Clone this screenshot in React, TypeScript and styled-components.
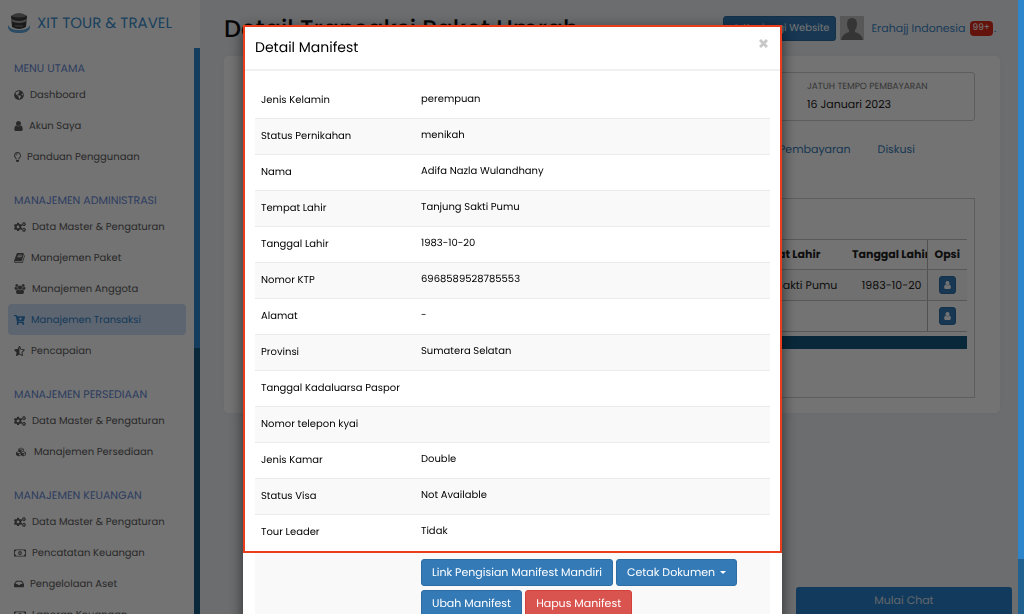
import React from "react";
import styled, { createGlobalStyle } from "styled-components";
import {
  FaGlobeAmericas,
  FaRegLightbulb,
  FaCogs,
  FaCartPlus,
  FaStarHalfAlt,
  FaCubes,
  FaRegMoneyBillAlt,
  FaInbox,
  FaExternalLinkAlt,
} from "react-icons/fa";

const Global = createGlobalStyle`
  * { box-sizing: border-box; }
  html, body, #root { height: 100%; }
  body {
    margin: 0;
    overflow: hidden;
    font-family: Poppins, Inter, "Liberation Sans", sans-serif;
    font-size: 11px;
    text-rendering: geometricPrecision;
    color: #111;
  }
  button { font: inherit; text-rendering: inherit; }
  a { text-decoration: none; }
  h1, h2, h3, p, ul, dl { margin: 0; padding: 0; }
`;

/* ---------- icons ---------- */

type IconProps = { width?: number; height?: number };

const UserIcon = (p: IconProps) => (
  <svg viewBox="256 128 1280 1536" fill="currentColor" aria-hidden="true" {...p}>
    <path d="M1536 1399q0 109-62.5 187t-150.5 78h-854q-88 0-150.5-78t-62.5-187q0-85 8.5-160.5t31.5-152 58.5-131 94-89 134.5-34.5q131 128 313 128t313-128q76 0 134.5 34.5t94 89 58.5 131 31.5 152 8.5 160.5zm-256-887q0 159-112.5 271.5t-271.5 112.5-271.5-112.5-112.5-271.5 112.5-271.5 271.5-112.5 271.5 112.5 112.5 271.5z" />
  </svg>
);

const BookIcon = (p: IconProps) => (
  <svg viewBox="64 128 1670 1536" fill="currentColor" aria-hidden="true" {...p}>
    <path d="M1703 478q40 57 18 129l-275 906q-19 64-76.5 107.5t-122.5 43.5h-923q-77 0-148.5-53.5t-99.5-131.5q-24-67-2-127 0-4 3-27t4-37q1-8-3-21.5t-3-19.5q2-11 8-21t16.5-23.5 16.5-23.5q23-38 45-91.5t30-91.5q3-10 .5-30t-.5-28q3-11 17-28t17-23q21-36 42-92t25-90q1-9-2.5-32t.5-28q4-13 22-30.5t22-22.5q19-26 42.5-84.5t27.5-96.5q1-8-3-25.5t-2-26.5q2-8 9-18t18-23 17-21q8-12 16.5-30.5t15-35 16-36 19.5-32 26.5-23.5 36-11.5 47.5 5.5l-1 3q38-9 51-9h761q74 0 114 56t18 130l-274 906q-36 119-71.5 153.5t-128.5 34.5h-869q-27 0-38 15-11 16-1 43 24 70 144 70h923q29 0 56-15.5t35-41.5l300-987q7-22 5-57 38 15 59 43zm-1064 2q-4 13 2 22.5t20 9.5h608q13 0 25.5-9.5t16.5-22.5l21-64q4-13-2-22.5t-20-9.5h-608q-13 0-25.5 9.5t-16.5 22.5zm-83 256q-4 13 2 22.5t20 9.5h608q13 0 25.5-9.5t16.5-22.5l21-64q4-13-2-22.5t-20-9.5h-608q-13 0-25.5 9.5t-16.5 22.5z" />
  </svg>
);

const UsersIcon = (p: IconProps) => (
  <svg viewBox="-64 0 1920 1792" fill="currentColor" aria-hidden="true" {...p}>
    <path d="M529 896q-162 5-265 128h-134q-82 0-138-40.5t-56-118.5q0-353 124-353 6 0 43.5 21t97.5 42.5 119 21.5q67 0 133-23-5 37-5 66 0 139 81 256zm1071 637q0 120-73 189.5t-194 69.5h-874q-121 0-194-69.5t-73-189.5q0-53 3.5-103.5t14-109 26.5-108.5 43-97.5 62-81 85.5-53.5 111.5-20q10 0 43 21.5t73 48 107 48 135 21.5 135-21.5 107-48 73-48 43-21.5q61 0 111.5 20t85.5 53.5 62 81 43 97.5 26.5 108.5 14 109 3.5 103.5zm-1024-1277q0 106-75 181t-181 75-181-75-75-181 75-181 181-75 181 75 75 181zm704 384q0 159-112.5 271.5t-271.5 112.5-271.5-112.5-112.5-271.5 112.5-271.5 271.5-112.5 271.5 112.5 112.5 271.5zm576 225q0 78-56 118.5t-138 40.5h-134q-103-123-265-128 81-117 81-256 0-29-5-66 66 23 133 23 59 0 119-21.5t97.5-42.5 43.5-21q124 0 124 353zm-128-609q0 106-75 181t-181 75-181-75-75-181 75-181 181-75 181 75 75 181z" />
  </svg>
);

const CloseIcon = () => (
  <svg width="9" height="9" viewBox="0 0 9 9" stroke="currentColor" strokeWidth="3" aria-hidden="true">
    <path d="M1 1 8 8M8 1 1 8" />
  </svg>
);

const LogoIcon = () => (
  <svg width="24" height="24" viewBox="0 0 24 24" aria-hidden="true">
    <path d="M1 14q-1 8 11 8t11-8q-2 5-11 5T1 14z" fill="#5fa8dd" />
    <path d="M4 5q8-4 16 0l-1 11q-7 4-14 0z" fill="#3c3c3c" />
    <path d="M4 5q8-6 16 0-8 3-16 0z" fill="#7c7c7c" />
    <path d="M4 8q8 4 16 0v2q-8 4-16 0z" fill="#a4a4a4" />
    <path d="M8 15h8" stroke="#8a8a8a" />
  </svg>
);

/* ---------- page frame ---------- */

const Page = styled.div`
  display: flex;
  height: 100%;
  overflow: hidden;
  background: #f0f2f6;
`;

const Track = styled.div`
  flex: none;
  width: 6px;
  background: #145a82;
`;

const PageTrack = styled(Track)`
  position: relative;
  z-index: 20;
  background: #20618f;
`;

const Thumb = styled.div<{ $size: number }>`
  height: ${(p) => p.$size}%;
  background: #2d86cc;
`;

/* ---------- sidebar ---------- */

const Sidebar = styled.aside`
  flex: none;
  display: flex;
  flex-direction: column;
  width: 200px;
  background: #fff;
`;

const Brand = styled.a`
  flex: none;
  display: flex;
  align-items: center;
  gap: 6px;
  height: 48px;
  padding: 0 7px 2px;
  font-size: 15px;
  color: #3a8fd0;
  white-space: nowrap;
`;

const SidebarBody = styled.div`
  flex: 1;
  display: flex;
  min-height: 0;
`;

const Menu = styled.nav`
  flex: 1;
  overflow: hidden;
  padding: 9px 8px 0;
`;

const MenuGroup = styled.section`
  margin-bottom: 17px;
`;

const MenuHeading = styled.h2`
  padding-left: 6px;
  line-height: 22px;
  font-size: 11px;
  font-weight: 400;
  color: #6488d6;
  white-space: nowrap;
`;

const MenuList = styled.ul`
  list-style: none;
`;

const MenuLink = styled.a<{ $active?: boolean }>`
  display: flex;
  align-items: center;
  gap: 6px;
  height: 31px;
  padding-left: 6px;
  border-radius: 4px;
  font-size: 10px;
  background: ${(p) => (p.$active ? "#cfe0fb" : "transparent")};
  color: ${(p) => (p.$active ? "#3182c4" : "#5c5c5c")};
  white-space: nowrap;
`;

const MenuIcon = styled.span<{ $width: number }>`
  display: flex;
  width: ${(p) => p.$width}px;

  svg { width: 100%; height: 10px; }
`;

/* ---------- main ---------- */

const Main = styled.main`
  flex: 1;
  min-width: 0;
  padding: 0 18px 0 24px;
`;

const TopBar = styled.header`
  display: flex;
  align-items: center;
  height: 56px;
`;

const PageTitle = styled.h1`
  flex: 1;
  min-width: 0;
  padding-top: 4px;
  font-size: 24px;
  font-weight: 500;
  line-height: 34px;
  white-space: nowrap;
`;

const PrimaryButton = styled.button`
  display: inline-flex;
  align-items: center;
  justify-content: center;
  gap: 5px;
  border: 1px solid #2e6da4;
  border-radius: 3px;
  background: #337ab7;
  color: #fff;
  white-space: nowrap;
`;

const SiteButton = styled(PrimaryButton)`
  width: 113px;
  height: 25px;
  padding: 0 6px;
  font-size: 10px;
`;

const Avatar = styled.svg`
  margin: 0 7px 0 4px;
`;

const Account = styled.a`
  font-size: 11px;
  color: #3a86c8;
  white-space: nowrap;
`;

const Badge = styled.span`
  margin-left: 4px;
  padding: 0 3px;
  border-radius: 4px;
  line-height: 15px;
  font-size: 9px;
  background: #dd2b1c;
  color: #fff;
`;

const Dot = styled.span`
  width: 7px;
  padding-left: 1px;
  color: #3a86c8;
`;

const Card = styled.section`
  height: 357px;
  padding: 16px 25px;
  border-radius: 5px;
  background: #fff;
  box-shadow: 0 0 8px rgba(0, 0, 0, 0.04);
`;

const InfoBox = styled.dl`
  display: flex;
  justify-content: flex-end;
  height: 49px;
  padding: 8px 0;
  border: 1px solid #cfcfcf;
  border-radius: 3px;
`;

const InfoItem = styled.div`
  width: 167px;
`;

const InfoLabel = styled.dt`
  line-height: 12px;
  font-size: 9px;
  color: #777;
`;

const InfoValue = styled.dd`
  margin: 0;
  line-height: 22px;
  color: #222;
`;

const Tabs = styled.nav`
  display: flex;
  justify-content: flex-end;
  gap: 27px;
  padding: 19px 60px 0 0;
  line-height: 18px;

  a { color: #337ab7; }
`;

const Panel = styled.div`
  height: 200px;
  margin-top: 40px;
  padding: 40px 7px 0;
  border: 1px solid #cfcfcf;
`;

const ManifestTable = styled.table`
  width: 100%;
  table-layout: fixed;
  border-collapse: collapse;
  color: #222;

  th, td {
    height: 31px;
    padding: 0;
    overflow: hidden;
    border-top: 1px solid #c4c4c4;
    border-bottom: 1px solid #c4c4c4;
    white-space: nowrap;
    text-align: center;
  }
  th { height: 30px; font-weight: 700; }
  tbody tr:first-child { background: #f9f9f9; }
  th:nth-child(3) { padding-left: 8px; text-align: left; }
  td:nth-child(3) { padding-right: 5px; text-align: right; }
  th:last-child, td:last-child { border-left: 1px solid #b4b4b4; }
`;

const RowButton = styled(PrimaryButton)`
  width: 17px;
  height: 18px;
  padding: 0;
  vertical-align: middle;
`;

const TableScroll = styled.div`
  height: 13px;
  margin-top: 4px;
  background: #145a82;
`;

const ChatButton = styled.button`
  position: fixed;
  right: 12px;
  bottom: 0;
  width: 216px;
  height: 27px;
  border: 0;
  border-radius: 3px 3px 0 0;
  background: #2980cc;
  font-size: 11px;
  color: #d8e2ec;
`;

/* ---------- modal ---------- */

const Backdrop = styled.div`
  position: fixed;
  inset: 0 6px 0 0;
  z-index: 10;
  display: flex;
  justify-content: center;
  align-items: flex-start;
  padding: 25px 0 0 7px;
  overflow: hidden;
  background: rgba(0, 0, 0, 0.55);
`;

const Dialog = styled.div`
  width: 539px;
  max-width: 100%;
  background: #fff;
  box-shadow: 0 4px 14px rgba(0, 0, 0, 0.6);
  color: #000;
`;

const Highlight = styled.div`
  padding-bottom: 3px;
  outline: 2px solid #e93d1c;
  outline-offset: -2px;
`;

const DialogHeader = styled.header`
  display: flex;
  justify-content: space-between;
  align-items: center;
  height: 46px;
  padding: 0 12px;
  border-bottom: 2px solid #f0f0f0;
`;

const DialogTitle = styled.h2`
  font-size: 14px;
  font-weight: 400;
`;

const CloseButton = styled.button`
  display: flex;
  padding: 2px;
  margin-bottom: 7px;
  border: 0;
  background: none;
  color: #c8c8c8;
`;

const Details = styled.table`
  width: calc(100% - 24px);
  margin: 11px 12px 0;
  table-layout: fixed;
  border-spacing: 0;
  font-size: 10px;

  tr:nth-child(even) { background: #f9f9f9; }
  th, td {
    height: 36px;
    padding: 0 6px 1px;
    border-top: 1px solid #ebebeb;
    font-weight: 400;
    text-align: left;
  }
  tr:first-child > * { border-color: transparent; }
  th { width: 160px; white-space: nowrap; }
  td { padding-bottom: 3px; }
`;

const Actions = styled.footer`
  display: flex;
  flex-wrap: wrap;
  gap: 4px 3px;
  margin: 0 12px;
  padding: 6px 20px 9px 166px;
  background: #f9f9f9;
`;

const ActionButton = styled(PrimaryButton)<{ $danger?: boolean }>`
  height: 27px;
  padding: 0 10px;
  font-size: 11px;
  background: ${(p) => (p.$danger ? "#d9534f" : "#337ab7")};
  border-color: ${(p) => (p.$danger ? "#d43f3a" : "#2e6da4")};
`;

const Caret = styled.span`
  border: 3px solid transparent;
  border-top-color: currentColor;
  border-bottom: 0;
`;

/* ---------- data ---------- */

type Item = { label: string; icon: React.ComponentType<any>; size: number; active?: boolean };

const groups: { title: string; items: Item[] }[] = [
  {
    title: "MENU UTAMA",
    items: [
      { label: "Dashboard", icon: FaGlobeAmericas, size: 10 },
      { label: "Akun Saya", icon: UserIcon, size: 9 },
      { label: "Panduan Penggunaan", icon: FaRegLightbulb, size: 7 },
    ],
  },
  {
    title: "MANAJEMEN ADMINISTRASI",
    items: [
      { label: "Data Master & Pengaturan", icon: FaCogs, size: 12 },
      { label: "Manajemen Paket", icon: BookIcon, size: 11 },
      { label: "Manajemen Anggota", icon: UsersIcon, size: 12 },
      { label: "Manajemen Transaksi", icon: FaCartPlus, size: 11, active: true },
      { label: "Pencapaian", icon: FaStarHalfAlt, size: 11 },
    ],
  },
  {
    title: "MANAJEMEN PERSEDIAAN",
    items: [
      { label: "Data Master & Pengaturan", icon: FaCogs, size: 12 },
      { label: "Manajemen Persediaan", icon: FaCubes, size: 14 },
    ],
  },
  {
    title: "MANAJEMEN KEUANGAN",
    items: [
      { label: "Data Master & Pengaturan", icon: FaCogs, size: 12 },
      { label: "Pencatatan Keuangan", icon: FaRegMoneyBillAlt, size: 12 },
      { label: "Pengelolaan Aset", icon: FaInbox, size: 10 },
      { label: "Laporan Keuangan", icon: FaRegMoneyBillAlt, size: 12 },
    ],
  },
];

const details: [string, string][] = [
  ["Jenis Kelamin", "perempuan"],
  ["Status Pernikahan", "menikah"],
  ["Nama", "Adifa Nazla Wulandhany"],
  ["Tempat Lahir", "Tanjung Sakti Pumu"],
  ["Tanggal Lahir", "1983-10-20"],
  ["Nomor KTP", "6968589528785553"],
  ["Alamat", "-"],
  ["Provinsi", "Sumatera Selatan"],
  ["Tanggal Kadaluarsa Paspor", ""],
  ["Nomor telepon kyai", ""],
  ["Jenis Kamar", "Double"],
  ["Status Visa", "Not Available"],
  ["Tour Leader", "Tidak"],
];

export default function App() {
  return (
    <>
      <Global />
      <Page>
        <Sidebar>
          <Brand href="#">
            <LogoIcon />
            XIT TOUR &amp; TRAVEL
          </Brand>
          <SidebarBody>
            <Menu>
              {groups.map((g) => (
                <MenuGroup key={g.title}>
                  <MenuHeading>{g.title}</MenuHeading>
                  <MenuList>
                    {g.items.map(({ label, icon: Icon, size, active }) => (
                      <li key={label}>
                        <MenuLink href="#" $active={active}>
                          <MenuIcon $width={size}>
                            <Icon />
                          </MenuIcon>
                          {label}
                        </MenuLink>
                      </li>
                    ))}
                  </MenuList>
                </MenuGroup>
              ))}
            </Menu>
            <Track>
              <Thumb $size={53} />
            </Track>
          </SidebarBody>
        </Sidebar>

        <Main>
          <TopBar>
            <PageTitle>Detail Transaksi Paket Umrah</PageTitle>
            <SiteButton type="button">
              <FaExternalLinkAlt size={9} />
              Kunjungi Website
            </SiteButton>
            <Avatar width="24" height="24" viewBox="0 0 24 24" aria-hidden="true">
              <path d="M0 0h24v24H0z" fill="#c2c2c2" />
              <path d="M7 8q0-6 5-6t5 6q0 4-2 6v2q7 2 8 8H1q1-6 8-8v-2q-2-2-2-6z" fill="#777" />
            </Avatar>
            <Account href="#">Erahajj Indonesia</Account>
            <Badge>99+</Badge>
            <Dot>.</Dot>
          </TopBar>

          <Card>
            <InfoBox>
              <InfoItem>
                <InfoLabel>JATUH TEMPO PEMBAYARAN</InfoLabel>
                <InfoValue>16 Januari 2023</InfoValue>
              </InfoItem>
            </InfoBox>
            <Tabs>
              <a href="#">Pembayaran</a>
              <a href="#">Diskusi</a>
            </Tabs>
            <Panel>
              <ManifestTable>
                <colgroup>
                  <col />
                  <col width="122" />
                  <col width="83" />
                  <col width="40" />
                </colgroup>
                <thead>
                  <tr>
                    <th />
                    <th>Tempat Lahir</th>
                    <th>Tanggal Lahir</th>
                    <th>Opsi</th>
                  </tr>
                </thead>
                <tbody>
                  <tr>
                    <td />
                    <td>Tanjung Sakti Pumu</td>
                    <td>1983-10-20</td>
                    <td>
                      <RowButton type="button" aria-label="Detail">
                        <UserIcon width={7} height={8} />
                      </RowButton>
                    </td>
                  </tr>
                  <tr>
                    <td />
                    <td />
                    <td />
                    <td>
                      <RowButton type="button" aria-label="Detail">
                        <UserIcon width={7} height={8} />
                      </RowButton>
                    </td>
                  </tr>
                </tbody>
              </ManifestTable>
              <TableScroll />
            </Panel>
          </Card>
          <ChatButton type="button">Mulai Chat</ChatButton>
        </Main>

        <PageTrack>
          <Thumb $size={91} />
        </PageTrack>
      </Page>

      <Backdrop>
        <Dialog role="dialog" aria-labelledby="manifest-title">
          <Highlight>
            <DialogHeader>
              <DialogTitle id="manifest-title">Detail Manifest</DialogTitle>
              <CloseButton type="button" aria-label="Tutup">
                <CloseIcon />
              </CloseButton>
            </DialogHeader>
            <Details>
              <tbody>
                {details.map(([label, value]) => (
                  <tr key={label}>
                    <th scope="row">{label}</th>
                    <td>{value}</td>
                  </tr>
                ))}
              </tbody>
            </Details>
          </Highlight>
          <Actions>
            <ActionButton type="button">Link Pengisian Manifest Mandiri</ActionButton>
            <ActionButton type="button">
              Cetak Dokumen
              <Caret />
            </ActionButton>
            <ActionButton type="button">Ubah Manifest</ActionButton>
            <ActionButton type="button" $danger>
              Hapus Manifest
            </ActionButton>
          </Actions>
        </Dialog>
      </Backdrop>
    </>
  );
}
